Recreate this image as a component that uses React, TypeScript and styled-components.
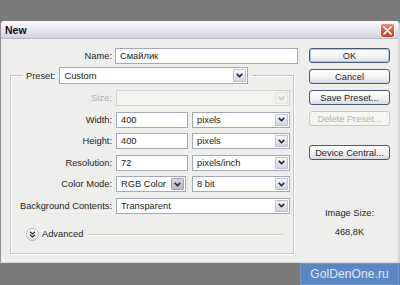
import React from "react";
import styled, { createGlobalStyle, css } from "styled-components";

const Global = createGlobalStyle`
  html, body { margin: 0; padding: 0; background: #7b7b7b; }
  body { width: 400px; height: 285px; overflow: hidden; font-family: "Liberation Sans", Arial, sans-serif; }
  * { box-sizing: border-box; }
`;

const Page = styled.div`
  width: 400px;
  height: 285px;
  display: flex;
  flex-direction: column;
  background: #7b7b7b;
  padding-top: 21px;
`;

const Dialog = styled.div`
  height: 242px;
  display: flex;
  flex-direction: column;
  background: #eeeeec;
  border-left: 1px solid #8f8f98;
  border-right: 2px solid #d6d6da;
  border-bottom: 1px solid #d8d8d8;
  border-radius: 4px 4px 0 0;
  overflow: hidden;
`;

const TitleBar = styled.div`
  height: 18px;
  flex: none;
  display: flex;
  align-items: center;
  justify-content: space-between;
  padding: 1px 3px 0 4px;
  background: linear-gradient(#fdfdfe, #eeeef3 35%, #d3d2e0);
  border-bottom: 1px solid #b9b8c8;
`;

const Title = styled.span`
  font-weight: bold;
  font-size: 10.5px;
  color: #101010;
`;

const CloseButton = styled.div`
  width: 15px;
  height: 15px;
  border-radius: 3px;
  border: 1px solid #f4f4f4;
  background: linear-gradient(#ec8c76, #d5563c 55%, #c24026);
  display: flex;
  align-items: center;
  justify-content: center;
`;

const Body = styled.div`
  flex: 1;
  display: flex;
  padding: 9px 0 0 9px;
`;

const LeftColumn = styled.div`
  width: 288px;
  display: flex;
  flex-direction: column;
`;

const NameRow = styled.div`
  display: grid;
  grid-template-columns: 102px 183px;
  column-gap: 3px;
  height: 16px;
  align-items: center;
`;

const Label = styled.span<{ $disabled?: boolean }>`
  text-align: right;
  font-size: 9.3px;
  white-space: nowrap;
  color: ${(p) => (p.$disabled ? "#b2b2b2" : "#1c1c1c")};
`;

const TextBox = styled.div<{ $w?: number }>`
  height: 16px;
  width: ${(p) => (p.$w ? `${p.$w}px` : "100%")};
  background: #fff;
  border: 1px solid #a3aab6;
  font-size: 9.3px;
  color: #1c1c1c;
  display: flex;
  align-items: center;
  padding-left: 4px;
`;

const Group = styled.fieldset`
  margin: 3px 0 0 0;
  width: 284px;
  border: 1px solid #c6c6c2;
  box-shadow: inset 1px 1px 0 #ffffff, 1px 1px 0 #ffffff;
  padding: 0 3px 12px 1px;
  min-width: 0;
`;

const Legend = styled.legend`
  margin-left: 11px;
  margin-bottom: -5px;
  padding: 0 5px 0 3px;
  display: flex;
  align-items: center;
  gap: 4px;
`;

const Rows = styled.div`
  margin-top: 11px;
  display: grid;
  grid-template-columns: 100px 174px;
  column-gap: 4px;
  grid-auto-rows: 16px;
  row-gap: 5.5px;
  align-items: center;
`;

const Pair = styled.div<{ $gap: number }>`
  display: flex;
  gap: ${(p) => p.$gap}px;
  height: 16px;
`;

const ComboBox = styled.div<{ $w?: number; $h?: number; $disabled?: boolean }>`
  height: ${(p) => p.$h ?? 16}px;
  width: ${(p) => (p.$w ? `${p.$w}px` : "100%")};
  flex: none;
  display: flex;
  align-items: stretch;
  background: ${(p) => (p.$disabled ? "#f4f4ef" : "#ffffff")};
  border: 1px solid ${(p) => (p.$disabled ? "#cfd3d6" : "#a3aab6")};
  padding: 1px;
`;

const ComboText = styled.span`
  flex: 1;
  font-size: 9.3px;
  color: #1c1c1c;
  display: flex;
  align-items: center;
  padding-left: 3px;
  white-space: nowrap;
  overflow: hidden;
`;

const Arrow = styled.span<{ $dark?: boolean; $disabled?: boolean }>`
  width: 13px;
  flex: none;
  display: flex;
  align-items: center;
  justify-content: center;
  border-radius: 1px;
  ${(p) =>
    p.$disabled
      ? css`
          background: #f1f1ec;
          border: 1px solid #e4e4de;
          color: #c8c8c4;
        `
      : p.$dark
      ? css`
          background: linear-gradient(#d6d6e0, #b8b8c8);
          border: 1px solid #a0a0b4;
          color: #1c2238;
        `
      : css`
          background: linear-gradient(#f6f6fa, #d4d4e0);
          border: 1px solid #c0c0d0;
          color: #1c2238;
        `}
`;

const AdvancedRow = styled.div`
  margin-top: 14px;
  display: flex;
  align-items: center;
  padding: 0 7px 0 14px;
  height: 13px;
`;

const RoundIcon = styled.span`
  width: 13px;
  height: 13px;
  border-radius: 50%;
  border: 1px solid #b6b6b6;
  background: linear-gradient(#ffffff, #e2e2e2);
  display: flex;
  align-items: center;
  justify-content: center;
  color: #2a2a2a;
  flex: none;
`;

const AdvancedText = styled.span`
  margin-left: 3px;
  font-size: 9.3px;
  color: #1c1c1c;
`;

const Rule = styled.span`
  flex: 1;
  margin-left: 5px;
  height: 1px;
  background: #c4c4c0;
  box-shadow: 0 1px 0 #ffffff;
`;

const RightColumn = styled.div`
  margin-left: 11px;
  width: 81px;
  display: flex;
  flex-direction: column;
  gap: 6px;
`;

const Button = styled.div<{ $default?: boolean; $disabled?: boolean; $spaced?: boolean }>`
  height: 15px;
  border-radius: 3px;
  font-size: 9.3px;
  display: flex;
  align-items: center;
  justify-content: center;
  white-space: nowrap;
  margin-top: ${(p) => (p.$spaced ? 13 : 0)}px;
  ${(p) =>
    p.$disabled
      ? css`
          border: 1px solid #cac8be;
          background: #f5f5f2;
          color: #b4b4ae;
        `
      : css`
          border: 1px solid #4a5878;
          background: linear-gradient(#ffffff, #f3f3f6 55%, #d9d9e3);
          color: #1c1c1c;
        `}
  ${(p) =>
    p.$default &&
    css`
      box-shadow: inset 0 0 0 1px #b4c6e6;
    `}
`;

const Info = styled.div`
  margin-top: 41px;
  display: flex;
  flex-direction: column;
  align-items: center;
  gap: 7px;
  font-size: 9.3px;
  color: #252525;
  line-height: 12px;
`;

const BottomStrip = styled.div`
  height: 22px;
  display: flex;
  justify-content: flex-end;
`;

const Watermark = styled.div`
  width: 99px;
  margin-right: 1px;
  background: #5b87c4;
  border: 1px solid #6f98d0;
  color: #e2eaf7;
  font-size: 12px;
  display: flex;
  align-items: center;
  justify-content: center;
  letter-spacing: 0.1px;
`;

const Chevron = () => (
  <svg width="7" height="5" viewBox="0 0 7 5">
    <path d="M0.8 0.9 L3.5 3.7 L6.2 0.9" fill="none" stroke="currentColor" strokeWidth="1.6" />
  </svg>
);

const DoubleChevron = () => (
  <svg width="7" height="7" viewBox="0 0 7 7">
    <path d="M1 0.8 L3.5 3 L6 0.8 M1 3.8 L3.5 6 L6 3.8" fill="none" stroke="currentColor" strokeWidth="1.2" />
  </svg>
);

const CloseX = () => (
  <svg width="9" height="9" viewBox="0 0 9 9">
    <path d="M1 1 L8 8 M8 1 L1 8" stroke="#ffffff" strokeWidth="1.7" strokeLinecap="round" />
  </svg>
);

type ComboProps = { value: string; w?: number; h?: number; disabled?: boolean; dark?: boolean };

const Combo = ({ value, w, h, disabled, dark }: ComboProps) => (
  <ComboBox $w={w} $h={h} $disabled={disabled}>
    <ComboText>{value}</ComboText>
    <Arrow $dark={dark} $disabled={disabled}>
      <Chevron />
    </Arrow>
  </ComboBox>
);

export default function App() {
  return (
    <>
      <Global />
      <Page>
        <Dialog>
          <TitleBar>
            <Title>New</Title>
            <CloseButton>
              <CloseX />
            </CloseButton>
          </TitleBar>
          <Body>
            <LeftColumn>
              <NameRow>
                <Label>Name:</Label>
                <TextBox>Смайлик</TextBox>
              </NameRow>
              <Group>
                <Legend>
                  <Label>Preset:</Label>
                  <Combo value="Custom" w={189} h={17} />
                </Legend>
                <Rows>
                  <Label $disabled>Size:</Label>
                  <Combo value="" disabled />
                  <Label>Width:</Label>
                  <Pair $gap={4}>
                    <TextBox $w={72}>400</TextBox>
                    <Combo value="pixels" w={98} />
                  </Pair>
                  <Label>Height:</Label>
                  <Pair $gap={4}>
                    <TextBox $w={72}>400</TextBox>
                    <Combo value="pixels" w={98} />
                  </Pair>
                  <Label>Resolution:</Label>
                  <Pair $gap={4}>
                    <TextBox $w={72}>72</TextBox>
                    <Combo value="pixels/inch" w={98} />
                  </Pair>
                  <Label>Color Mode:</Label>
                  <Pair $gap={6}>
                    <Combo value="RGB Color" w={70} dark />
                    <Combo value="8 bit" w={98} />
                  </Pair>
                  <Label>Background Contents:</Label>
                  <Combo value="Transparent" />
                </Rows>
                <AdvancedRow>
                  <RoundIcon>
                    <DoubleChevron />
                  </RoundIcon>
                  <AdvancedText>Advanced</AdvancedText>
                  <Rule />
                </AdvancedRow>
              </Group>
            </LeftColumn>
            <RightColumn>
              <Button $default>OK</Button>
              <Button>Cancel</Button>
              <Button>Save Preset...</Button>
              <Button $disabled>Delete Preset...</Button>
              <Button $spaced>Device Central...</Button>
              <Info>
                <span>Image Size:</span>
                <span>468,8K</span>
              </Info>
            </RightColumn>
          </Body>
        </Dialog>
        <BottomStrip>
          <Watermark>GolDenOne.ru</Watermark>
        </BottomStrip>
      </Page>
    </>
  );
}
